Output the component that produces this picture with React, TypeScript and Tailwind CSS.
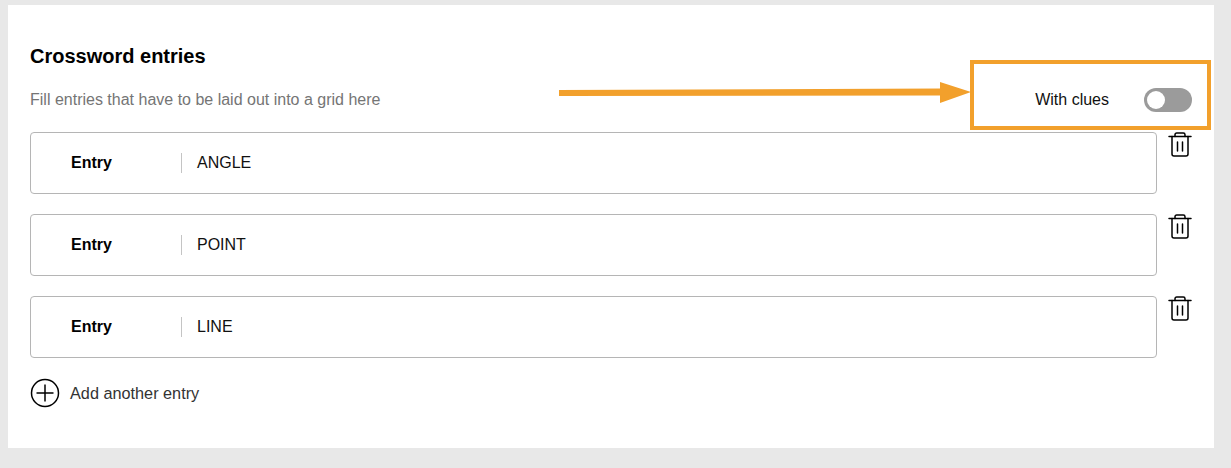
const ENTRIES = ["ANGLE", "POINT", "LINE"];

function TrashIcon() {
  return (
    <svg width="24" height="26" viewBox="0 0 24 26" fill="none" stroke="#000" strokeWidth="1.5" strokeLinecap="round" strokeLinejoin="round">
      <path d="M1 4.500h22" />
      <path d="M7 4.500V2.800c0-1 .7-1.700 1.700-1.700h6.600c1 0 1.700.7 1.700 1.700v1.700" />
      <path d="M4 4.500v17.500c0 1.200.8 2 2 2h12c1.200 0 2-.8 2-2V4.500" />
      <path d="M9.500 10v9M14.500 10v9" />
    </svg>
  );
}

function PlusIcon() {
  return (
    <svg width="30" height="30" viewBox="0 0 30 30" fill="none" stroke="#000" strokeWidth="1.5">
      <circle cx="15" cy="15" r="13.500" />
      <path d="M15 6.500v17M6.500 15h17" />
    </svg>
  );
}

export default function App() {
  return (
    <div className="h-[468px] bg-[#e8e8e8] pt-[5px] pl-2 pr-[17px] font-['Liberation_Sans',Arial,sans-serif]">
      <div className="relative h-[443px] bg-white pl-[22px] pt-[40px]">
        <h2 className="text-[20px] leading-[23px] font-bold text-black">Crossword entries</h2>

        <div className="mt-[22px] flex h-[20px] items-center justify-between pr-[22px]">
          <p className="text-base text-[#757575]">Fill entries that have to be laid out into a grid here</p>
          <div className="flex items-center">
            <span className="text-base text-[#111]">With clues</span>
            <div className="ml-[35px] flex h-6 w-12 items-center rounded-full bg-[#9b9b9b] pl-[3px]">
              <div className="h-[18px] w-[18px] rounded-full bg-white" />
            </div>
          </div>
        </div>

        <div className="mt-[22px] flex flex-col gap-5">
          {ENTRIES.map((entry) => (
            <div key={entry} className="flex items-start">
              <div className="flex h-[62px] w-[1127px] items-center rounded-[4px] border border-[#b5b5b5] bg-white">
                <span className="w-[150px] pl-10 text-base font-bold text-black">Entry</span>
                <span className="h-5 w-px bg-[#c4c4c4]" />
                <span className="pl-[15px] text-base text-[#111]">{entry}</span>
              </div>
              <div className="ml-[11px]">
                <TrashIcon />
              </div>
            </div>
          ))}
        </div>

        <div className="mt-5 flex items-center gap-[10px]">
          <PlusIcon />
          <span className="text-[16.250px] text-[#333]">Add another entry</span>
        </div>

        {/* annotation drawn on top of the form */}
        <div className="absolute left-[962px] top-[55px] h-[70px] w-[241px] border-[4px] border-[#f2a02c]" />
        <svg className="absolute left-[551px] top-[73px]" width="412" height="28" viewBox="0 0 412 28">
          <path d="M0 12 L381 10.500 L381 4 L412 14 L381 25 L381 17.500 L0 18 Z" fill="#f2a02c" />
        </svg>
      </div>
    </div>
  );
}
